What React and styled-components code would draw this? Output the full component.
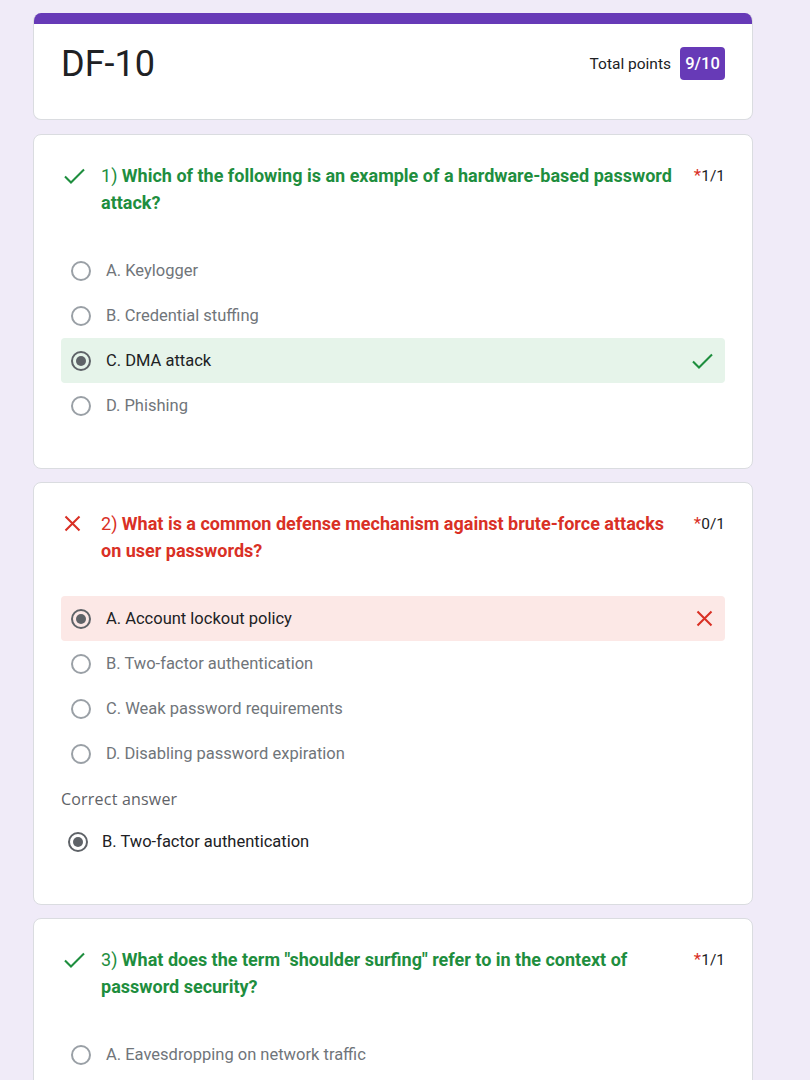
import React from "react";
import styled, { createGlobalStyle } from "styled-components";

const Global = createGlobalStyle`
  html, body { margin: 0; padding: 0; background: #f0ebf8; }
  body { font-family: Roboto, "Noto Sans", Arial, sans-serif; color: #202124; }
`;

const Page = styled.div`
  padding: 13px 0 0 33px;
  width: 720px;
`;

const Card = styled.div`
  background: #fff;
  border: 1px solid #dadce0;
  border-radius: 8px;
  margin-bottom: 13px;
  overflow: hidden;
  box-sizing: border-box;
`;

const HeaderCard = styled(Card)`
  border-top: none;
  margin-bottom: 14px;
`;

const TopBar = styled.div`
  height: 11px;
  background: #673ab7;
`;

const HeaderBody = styled.div`
  display: flex;
  justify-content: space-between;
  align-items: flex-start;
  padding: 18px 27px 0 27px;
  height: 77px;
`;

const Title = styled.h1`
  margin: 0;
  font-size: 36px;
  font-weight: 400;
  line-height: 44px;
  color: #202124;
`;

const Score = styled.div`
  display: flex;
  align-items: center;
  gap: 9px;
  margin-top: 5px;
  font-size: 15.5px;
  color: #202124;
`;

const Badge = styled.span`
  background: #673ab7;
  color: #fff;
  border-radius: 4px;
  width: 45px;
  height: 33px;
  display: inline-flex;
  align-items: center;
  justify-content: center;
  font-size: 16.5px;
  font-weight: 500;
`;

const QBody = styled.div`
  padding: 27px 27px 40px 27px;
`;

const QHead = styled.div`
  display: flex;
  align-items: flex-start;
  margin-bottom: 32px;
`;

const QIcon = styled.div`
  width: 40px;
  flex: none;
  height: 27px;
  display: flex;
  align-items: center;
  padding-left: 3px;
  box-sizing: border-box;
`;

const QText = styled.div`
  flex: 1;
  font-size: 18px;
  line-height: 27px;
  font-weight: 700;
  color: ${(p) => (p.$ok ? "#1e8e3e" : "#d93025")};
  padding-right: 20px;
  span { font-weight: 400; }
`;

const Points = styled.div`
  flex: none;
  font-size: 15.5px;
  line-height: 27px;
  color: #202124;
  b { color: #d93025; font-weight: 400; font-size: 17px; }
`;

const Option = styled.div`
  display: flex;
  align-items: center;
  height: 45px;
  padding: 0 12px 0 ${(p) => (p.$inset ? "7px" : "10px")};
  border-radius: 4px;
  background: ${(p) =>
    p.$state === "right" ? "#e6f4ea" : p.$state === "wrong" ? "#fce8e6" : "transparent"};
`;

const Radio = styled.span`
  width: 20px;
  height: 20px;
  box-sizing: border-box;
  border-radius: 50%;
  border: 2px solid ${(p) => (p.$checked ? "#5f6368" : "#9aa0a6")};
  display: flex;
  align-items: center;
  justify-content: center;
  flex: none;
  &::after {
    content: "";
    display: ${(p) => (p.$checked ? "block" : "none")};
    width: 10px;
    height: 10px;
    border-radius: 50%;
    background: #5f6368;
  }
`;

const OptText = styled.span`
  flex: 1;
  margin-left: ${(p) => (p.$inset ? "14px" : "15px")};
  font-size: 16.5px;
  color: ${(p) => (p.$dark ? "#202124" : "#70757a")};
`;

const CorrectLabel = styled.div`
  font-family: "Open Sans", Roboto, sans-serif;
  font-size: 16px;
  letter-spacing: 0.2px;
  font-weight: 500;
  color: #5f6368;
  line-height: 20px;
  margin: 13px 0 10px 0;
`;

const Check = ({ w = 21, h = 16 }) => (
  <svg width={w} height={h} viewBox="0 0 21 16" fill="none">
    <polyline points="1,8.5 7,14.5 20,1.5" stroke="#1e8e3e" strokeWidth="2.1" />
  </svg>
);

const Cross = () => (
  <svg width="17" height="17" viewBox="0 0 17 17" fill="none">
    <path d="M1.5 1.5 L15.5 15.5 M15.5 1.5 L1.5 15.5" stroke="#d93025" strokeWidth="2.1" />
  </svg>
);

const questions = [
  {
    n: 1,
    ok: true,
    text: "Which of the following is an example of a hardware-based password attack?",
    pts: "1/1",
    options: [
      { t: "A. Keylogger" },
      { t: "B. Credential stuffing" },
      { t: "C. DMA attack", checked: true, state: "right" },
      { t: "D. Phishing" },
    ],
  },
  {
    n: 2,
    ok: false,
    text: "What is a common defense mechanism against brute-force attacks on user passwords?",
    pts: "0/1",
    options: [
      { t: "A. Account lockout policy", checked: true, state: "wrong" },
      { t: "B. Two-factor authentication" },
      { t: "C. Weak password requirements" },
      { t: "D. Disabling password expiration" },
    ],
    correct: "B. Two-factor authentication",
  },
  {
    n: 3,
    ok: true,
    text: 'What does the term "shoulder surfing" refer to in the context of password security?',
    pts: "1/1",
    options: [{ t: "A. Eavesdropping on network traffic" }],
  },
];

export default function App() {
  return (
    <Page>
      <Global />
      <HeaderCard>
        <TopBar />
        <HeaderBody>
          <Title>DF-10</Title>
          <Score>
            Total points <Badge>9/10</Badge>
          </Score>
        </HeaderBody>
      </HeaderCard>
      {questions.map((q) => (
        <Card key={q.n}>
          <QBody>
            <QHead>
              <QIcon>{q.ok ? <Check /> : <Cross />}</QIcon>
              <QText $ok={q.ok}>
                <span>{q.n}) </span>
                {q.text}
              </QText>
              <Points>
                <b>*</b>
                {q.pts}
              </Points>
            </QHead>
            {q.options.map((o) => (
              <Option key={o.t} $state={o.state}>
                <Radio $checked={o.checked} />
                <OptText $dark={o.checked}>{o.t}</OptText>
                {o.state === "right" && <Check />}
                {o.state === "wrong" && <Cross />}
              </Option>
            ))}
            {q.correct && (
              <>
                <CorrectLabel>Correct answer</CorrectLabel>
                <Option $inset>
                  <Radio $checked />
                  <OptText $dark $inset>{q.correct}</OptText>
                </Option>
              </>
            )}
          </QBody>
        </Card>
      ))}
    </Page>
  );
}
